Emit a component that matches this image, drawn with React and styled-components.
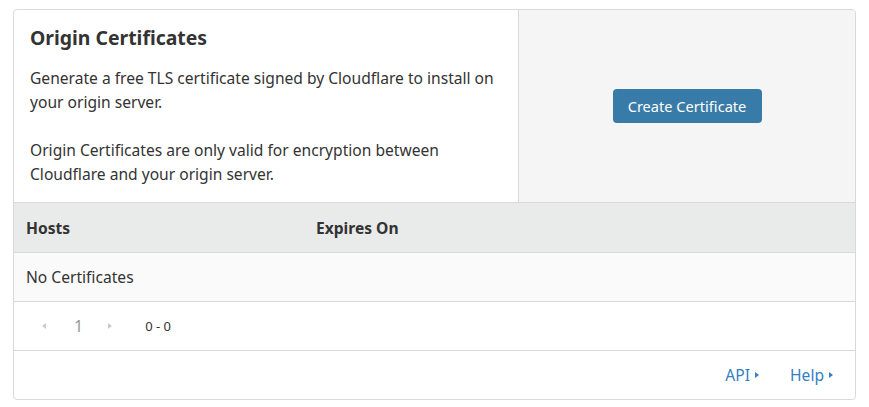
import React from "react";
import styled, { createGlobalStyle } from "styled-components";

const Global = createGlobalStyle`
  html, body { margin: 0; padding: 0; background: #fff; }
  body {
    font-family: "Noto Sans", "Open Sans", sans-serif;
    color: #333;
    -webkit-font-smoothing: antialiased;
  }
  * { box-sizing: border-box; }
`;

const Page = styled.div`
  padding: 9px 13px;
`;

const Card = styled.section`
  border: 1px solid #d9d9d9;
  border-radius: 4px;
  overflow: hidden;
  background: #fff;
`;

const Top = styled.div`
  display: grid;
  grid-template-columns: 505px 1fr;
  height: 193px;
  border-bottom: 1px solid #d9d9d9;
`;

const Info = styled.div`
  padding: 16px;
  border-right: 1px solid #d9d9d9;
`;

const Title = styled.h2`
  margin: 0 0 16px;
  font-size: 19.4px;
  line-height: 24px;
  font-weight: 700;
  color: #333;
`;

const Text = styled.p`
  margin: 0 0 ${(p) => (p.$last ? 0 : 24)}px;
  font-size: 15.6px;
  line-height: 24px;
  color: #333;
`;

const Action = styled.div`
  background: #f5f5f5;
  display: flex;
  align-items: center;
  justify-content: center;
`;

const Button = styled.button`
  height: 34px;
  width: 149px;
  padding: 0;
  border: none;
  border-radius: 4px;
  background: #387ba9;
  color: #fff;
  font-family: inherit;
  font-size: 14.6px;
  cursor: pointer;
`;

const Row = styled.div`
  display: grid;
  grid-template-columns: 290px 1fr;
  align-items: center;
  height: 49px;
  padding: 0 12px;
  background: ${(p) => p.$bg || "#fff"};
  border-top: ${(p) => (p.$first ? "none" : "1px solid #d9d9d9")};
  font-size: 15.6px;
  font-weight: ${(p) => (p.$head ? 700 : 400)};
  color: #333;
`;

const Pager = styled.div`
  display: flex;
  align-items: center;
  height: 49px;
  padding: 0 0 0 28px;
  border-top: 1px solid #d9d9d9;
`;

const Arrow = styled.span`
  width: 0;
  height: 0;
  border-top: 3px solid transparent;
  border-bottom: 3px solid transparent;
  ${(p) =>
    p.$dir === "left"
      ? "border-right: 4px solid #ccc;"
      : "border-left: 4px solid #ccc;"}
`;

const PageNum = styled.span`
  margin: 0 25px 0 28px;
  font-size: 16px;
  color: #999;
`;

const Range = styled.span`
  margin-left: 33px;
  font-size: 13px;
  color: #333;
`;

const Footer = styled.div`
  display: flex;
  justify-content: flex-end;
  align-items: center;
  gap: 31px;
  height: 49px;
  padding: 0 22px 0 0;
  border-top: 1px solid #d9d9d9;
`;

const Link = styled.a`
  display: inline-flex;
  align-items: center;
  gap: 5px;
  font-size: 15.6px;
  color: #3480c0;
  text-decoration: none;
`;

const Caret = styled.span`
  width: 0;
  height: 0;
  border-top: 3.5px solid transparent;
  border-bottom: 3.5px solid transparent;
  border-left: 4px solid #3480c0;
`;

export default function App() {
  return (
    <Page>
      <Global />
      <Card>
        <Top>
          <Info>
            <Title>Origin Certificates</Title>
            <Text>
              Generate a free TLS certificate signed by Cloudflare to install on
              your origin server.
            </Text>
            <Text $last>
              Origin Certificates are only valid for encryption between
              Cloudflare and your origin server.
            </Text>
          </Info>
          <Action>
            <Button>Create Certificate</Button>
          </Action>
        </Top>
        <Row $head $first $bg="#e9eaea">
          <span>Hosts</span>
          <span>Expires On</span>
        </Row>
        <Row $bg="#fafafa">
          <span>No Certificates</span>
        </Row>
        <Pager>
          <Arrow $dir="left" />
          <PageNum>1</PageNum>
          <Arrow $dir="right" />
          <Range>0 - 0</Range>
        </Pager>
        <Footer>
          <Link href="#">
            API <Caret />
          </Link>
          <Link href="#">
            Help <Caret />
          </Link>
        </Footer>
      </Card>
    </Page>
  );
}
